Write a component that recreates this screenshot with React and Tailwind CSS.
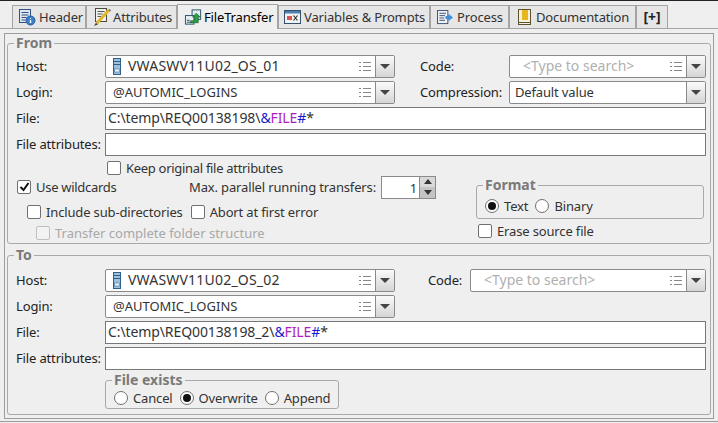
import React from "react";

const HeaderIcon = () => (
  <svg width="18" height="18" viewBox="0 0 18 18" className="shrink-0">
    <rect x="1.5" y="1.5" width="11" height="13" fill="#dfe7f3" stroke="#33527f" />
    <path d="M3.5 4.5h7M3.5 7h7M3.5 9.5h5M3.5 12h4" stroke="#33527f" />
    <circle cx="12.5" cy="12.5" r="4.5" fill="#3d7fc9" stroke="#2a5a96" />
    <path d="M12.5 10v.8M12.5 12v3" stroke="#fff" strokeWidth="1.4" />
  </svg>
);

const AttributesIcon = () => (
  <svg width="18" height="20" viewBox="0 0 18 20" className="shrink-0">
    <rect x="2.5" y="1.5" width="11" height="13" fill="#eef0ee" stroke="#4a4a3c" />
    <path d="M4.5 4.5h7M4.5 7h5M4.5 9.5h4" stroke="#555" />
    <path d="M16 3 L4 16" stroke="#e3b52a" strokeWidth="3" />
    <path d="M3 15.5 L1 19 L5 17.5z" fill="#5a4a1a" />
    <path d="M16 2.5 L17.5 4" stroke="#666" strokeWidth="1.5" />
  </svg>
);

const TransferIcon = () => (
  <svg width="19" height="18" viewBox="0 0 20 18" className="shrink-0">
    <rect x="8.5" y="1.5" width="9" height="10" fill="#e6edf2" stroke="#27506a" />
    <rect x="1.5" y="7.5" width="9" height="9" fill="#e6edf2" stroke="#27506a" />
    <path d="M3 12.5h3M3 14.5h5" stroke="#27506a" />
    <path d="M7 13h4V9H9l4-4 4 4h-2v6H7z" fill="#2f9e44" stroke="#17602a" strokeWidth="0.7" />
  </svg>
);

const VariablesIcon = () => (
  <svg width="17" height="16" viewBox="0 0 17 16" className="shrink-0">
    <rect x="0.5" y="1.5" width="16" height="13" fill="#f2f2f2" stroke="#33506e" />
    <rect x="1" y="2" width="15" height="2.5" fill="#4f7fae" />
    <rect x="3" y="7" width="5" height="4" fill="#d9534f" />
    <path d="M9.5 6.5l4 5M13.5 6.5l-4 5" stroke="#333" strokeWidth="1.2" />
  </svg>
);

const ProcessIcon = () => (
  <svg width="17" height="15" viewBox="0 0 18 16" className="shrink-0">
    <rect x="0.5" y="0.5" width="11" height="14" fill="#eef1f6" stroke="#3c4f72" />
    <path d="M2.5 3.5h7M2.5 6h6M2.5 8.5h5M2.5 11h6" stroke="#3c4f72" />
    <path d="M9 6.5h3V4l5 4-5 4V9.5H9z" fill="#3f8fd8" />
  </svg>
);

const DocIcon = () => (
  <svg width="13" height="17" viewBox="0 0 13 17" className="shrink-0">
    <rect x="0.5" y="0.5" width="12" height="15" fill="#f4f1dc" stroke="#5c5230" />
    <rect x="4" y="1" width="6" height="10" fill="#e8b71e" />
    <path d="M1 13.5h11" stroke="#5c5230" />
  </svg>
);

const ServerIcon = () => (
  <svg width="8" height="17" viewBox="0 0 8 17" className="shrink-0">
    <rect x="0.5" y="0.5" width="7" height="16" fill="#9fc0dc" stroke="#2f6089" />
    <path d="M1 3.5h6M1 6.5h6" stroke="#2f6089" />
    <rect x="1.5" y="11" width="5" height="3" fill="#e6f0f8" stroke="#2f6089" strokeWidth="0.5" />
  </svg>
);

const ListIcon = () => (
  <svg width="12" height="11" viewBox="0 0 12 11" className="shrink-0">
    <path d="M0 1.5h2M4 1.5h8M0 5.5h2M4 5.5h8M0 9.5h2M4 9.5h8" stroke="#888" />
  </svg>
);

const Arrow = () => (
  <span className="w-[19px] h-full shrink-0 flex items-center justify-center border-l border-[#8a8a8a] bg-gradient-to-b from-[#fafafa] to-[#d5d5d5]">
    <span className="w-0 h-0 border-x-[5px] border-x-transparent border-t-[5px] border-t-[#444]" />
  </span>
);

const Tab = ({ icon, label, active, className }) => (
  <div
    className={`flex items-center whitespace-nowrap border-x border-t border-[#a4a4a4] ${
      active ? "h-[25px] -mb-px bg-[#efefef] text-black" : "h-[23px] bg-[#e6e6e6] text-[#333]"
    } ${className}`}
  >
    {icon}
    <span>{label}</span>
  </div>
);

const Label = ({ children, className = "w-[89px]" }) => (
  <span className={`shrink-0 whitespace-nowrap pb-[2px] text-[#222] ${className}`}>{children}</span>
);

const Combo = ({ icon, text, textClass = "", placeholder, list = true, className }) => (
  <div className={`h-[23px] flex items-center bg-white border border-[#8a8a8a] rounded-[2px] ${className}`}>
    <div className={`flex-1 flex items-center gap-[7px] min-w-0 ${list ? "pl-[7px]" : "pl-[5px]"}`}>
      {icon}
      <span className={`pb-[1px] ${placeholder ? "pl-[6px] text-[#b0b0b0]" : "text-[#333]"} ${textClass}`}>{text}</span>
    </div>
    {list && (
      <span className="mr-[4px]">
        <ListIcon />
      </span>
    )}
    <Arrow />
  </div>
);

const TextField = ({ children }) => (
  <div className="flex-1 h-[23px] flex items-center pl-[2px] pb-[1px] bg-white border border-[#777] text-[#333] text-[14px] tracking-[-0.1px]">
    {children}
  </div>
);

const Check = ({ label, checked, disabled, className = "" }) => (
  <div className={`flex items-center gap-[5px] whitespace-nowrap ${disabled ? "text-[#a8a8a8]" : "text-[#333]"} ${className}`}>
    <span
      className={`w-[14px] h-[14px] shrink-0 rounded-[2px] border flex items-center justify-center ${
        disabled ? "border-[#c0c0c0] bg-[#f2f2f2]" : "border-[#707070] bg-white"
      }`}
    >
      {checked && (
        <svg width="11" height="10" viewBox="0 0 11 10">
          <path d="M1.5 5l3 3 5-7" fill="none" stroke="#111" strokeWidth="2" />
        </svg>
      )}
    </span>
    <span>{label}</span>
  </div>
);

const Radio = ({ label, checked }) => (
  <div className="flex items-center gap-[5px] whitespace-nowrap text-[#333]">
    <span className="w-[14px] h-[14px] shrink-0 rounded-full border border-[#707070] bg-white flex items-center justify-center">
      {checked && <span className="w-[8px] h-[8px] rounded-full bg-[#111]" />}
    </span>
    <span>{label}</span>
  </div>
);

const Group = ({ title, className, children }) => (
  <fieldset className={`border border-[#a9a9a9] rounded-[3px] ${className}`}>
    <legend className="ml-[-2px] px-[2px] text-[14px] tracking-normal font-bold text-[#7a7a7a] leading-[14px]">{title}</legend>
    {children}
  </fieldset>
);

const FilePath = ({ base }) => (
  <>
    {base}
    <span className="text-[#1a1ad0]">&amp;</span>
    <span className="text-[#b01fc0]">FILE</span>
    <span className="text-[#1a1ad0]">#</span>*
  </>
);

const hostText = "text-[14px] tracking-[0.2px]";
const hintText = "text-[14px] tracking-normal";
const loginText = "tracking-normal";

export default function App() {
  return (
    <div
      className="w-[718px] h-[423px] overflow-hidden bg-[#efefef] border-t border-[#222] text-[13px] tracking-[-0.15px] leading-[18px] pt-[4px]"
      style={{ fontFamily: '"Noto Sans", Tahoma, sans-serif' }}
    >
      <div className="h-[24px] flex items-end pl-[12px] border-b border-[#a4a4a4]">
        <Tab icon={<HeaderIcon />} label="Header" className="w-[74px] pl-[5px] gap-[3px]" />
        <Tab icon={<AttributesIcon />} label="Attributes" className="w-[91px] pl-[6px] gap-[2px]" />
        <Tab icon={<TransferIcon />} label="FileTransfer" active className="w-[101px] pl-[6px] gap-[1px]" />
        <Tab icon={<VariablesIcon />} label="Variables & Prompts" className="w-[152px] pl-[5px] gap-[3px]" />
        <Tab icon={<ProcessIcon />} label="Process" className="w-[79px] pl-[6px] gap-[3px]" />
        <Tab icon={<DocIcon />} label="Documentation" className="w-[127px] pl-[8px] gap-[5px]" />
        <Tab label={<span className="font-bold text-[14px] text-[#222]">[+]</span>} className="w-[32px] justify-center" />
      </div>

      <div className="mx-[4px] mt-[4px] h-[386px] border border-[#9c9c9c] px-[2px] pt-[2px]">
        <Group title="From" className="h-[208px] pl-[8px] pr-[4px]">
          <div className="flex flex-col gap-[3px] mt-[5px]">
            <div className="flex items-center">
              <Label>Host:</Label>
              <Combo icon={<ServerIcon />} text="VWASWV11U02_OS_01" textClass={hostText} className="w-[290px]" />
              <Label className="w-[89px] ml-[25px]">Code:</Label>
              <Combo text="<Type to search>" textClass={hintText} placeholder className="w-[197px]" />
            </div>
            <div className="flex items-center">
              <Label>Login:</Label>
              <Combo text="@AUTOMIC_LOGINS" textClass={loginText} className="w-[290px]" />
              <Label className="w-[89px] ml-[25px]">Compression:</Label>
              <Combo text="Default value" list={false} className="w-[197px]" />
            </div>
            <div className="flex items-center">
              <Label>File:</Label>
              <TextField>
                <FilePath base="C:\temp\REQ00138198\" />
              </TextField>
            </div>
            <div className="flex items-center">
              <Label>File attributes:</Label>
              <TextField />
            </div>
          </div>

          <div className="flex mt-[3px]">
            <div className="w-[420px] shrink-0">
              <Check label="Keep original file attributes" className="ml-[91px] h-[18px] tracking-[-0.3px]" />
              <div className="flex items-center justify-between h-[20px]">
                <Check label="Use wildcards" checked className="ml-[1px] tracking-[-0.3px]" />
                <div className="flex items-center gap-[5px]">
                  <span className="text-[#333] whitespace-nowrap">Max. parallel running transfers:</span>
                  <div className="w-[55px] h-[23px] flex bg-white border border-[#8a8a8a]">
                    <span className="flex-1 text-right pr-[2px] leading-[22px] text-[#333]">1</span>
                    <span className="w-[16px] flex flex-col border-l border-[#8a8a8a] bg-[#d8d8d8]">
                      <span className="flex-1 flex items-center justify-center">
                        <span className="w-0 h-0 border-x-[4px] border-x-transparent border-b-[5px] border-b-[#333]" />
                      </span>
                      <span className="flex-1 flex items-center justify-center bg-[#c4c4c4]">
                        <span className="w-0 h-0 border-x-[4px] border-x-transparent border-t-[5px] border-t-[#333]" />
                      </span>
                    </span>
                  </div>
                </div>
              </div>
              <div className="flex items-center gap-[8px] ml-[11px] mt-[5px] h-[20px]">
                <Check label="Include sub-directories" />
                <Check label="Abort at first error" />
              </div>
              <Check label="Transfer complete folder structure" disabled className="ml-[20px] h-[18px] mt-[2px] tracking-normal" />
            </div>
            <div className="ml-[40px] mt-[19px]">
              <Group title="Format" className="h-[41px] w-[228px] px-[8px]">
                <div className="flex items-center gap-[7px] h-[20px] mt-[4px]">
                  <Radio label="Text" checked />
                  <Radio label="Binary" />
                </div>
              </Group>
              <Check label="Erase source file" className="ml-[2px] mt-[3px] h-[18px]" />
            </div>
          </div>
        </Group>

        <Group title="To" className="h-[167px] mt-[4px] pl-[8px] pr-[4px]">
          <div className="flex flex-col gap-[3px] mt-[7px]">
            <div className="flex items-center">
              <Label>Host:</Label>
              <Combo icon={<ServerIcon />} text="VWASWV11U02_OS_02" textClass={hostText} className="w-[290px]" />
              <Label className="w-[42px] ml-[33px]">Code:</Label>
              <Combo text="<Type to search>" textClass={hintText} placeholder className="w-[236px]" />
            </div>
            <div className="flex items-center">
              <Label>Login:</Label>
              <Combo text="@AUTOMIC_LOGINS" textClass={loginText} className="w-[290px]" />
            </div>
            <div className="flex items-center">
              <Label>File:</Label>
              <TextField>
                <FilePath base="C:\temp\REQ00138198_2\" />
              </TextField>
            </div>
            <div className="flex items-center">
              <Label>File attributes:</Label>
              <TextField />
            </div>
          </div>
          <Group title="File exists" className="w-[233px] h-[36px] ml-[89px] mt-[3px] px-[8px]">
            <div className="flex items-center gap-[7px] h-[20px] mt-[1px]">
              <Radio label="Cancel" />
              <Radio label="Overwrite" checked />
              <Radio label="Append" />
            </div>
          </Group>
        </Group>
      </div>
      <div className="mt-[2px] border-t border-[#9c9c9c]" />
    </div>
  );
}
